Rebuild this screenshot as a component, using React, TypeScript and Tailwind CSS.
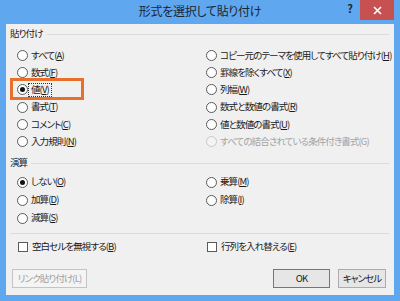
import React from "react";

const font = { fontFamily: '"Noto Sans CJK JP", "Noto Sans", sans-serif', fontFeatureSettings: '"palt"' };

type Opt = { label: string; key: string; checked?: boolean; disabled?: boolean; focus?: boolean };

const Radio = ({ checked, disabled }: { checked?: boolean; disabled?: boolean }) => (
  <span
    className={`w-[11px] h-[11px] rounded-full border flex items-center justify-center shrink-0 ${
      disabled ? "border-[#c8c8c8] bg-[#f4f4f4]" : "border-[#5a5a5a] bg-white"
    }`}
  >
    {checked && <span className="w-[5px] h-[5px] rounded-full bg-[#111]" />}
  </span>
);

const Label = ({ label, k }: { label: string; k: string }) => (
  <>
    {label}(<span className="underline underline-offset-[1px]">{k}</span>)
  </>
);

const Option = ({ o, h }: { o: Opt; h: string }) => (
  <div className={`flex items-center gap-[2px] whitespace-nowrap ${h}`}>
    <Radio checked={o.checked} disabled={o.disabled} />
    <span
      className={`leading-none px-[1px] ${o.disabled ? "text-[#a3a3a3]" : "text-[#1a1a1a]"} ${
        o.focus ? "outline outline-1 outline-dotted outline-[#333] outline-offset-[1px]" : ""
      }`}
    >
      {o.disabled ? `${o.label}(${o.key})` : <Label label={o.label} k={o.key} />}
    </span>
  </div>
);

const Header = ({ title }: { title: string }) => (
  <div className="flex items-center gap-[4px] h-[18px] pr-[5px]">
    <span className="text-[#1a1a1a] leading-none">{title}</span>
    <span className="flex-1 h-px bg-[#dcdcdc]" />
  </div>
);

const pasteLeft: Opt[] = [
  { label: "すべて", key: "A" },
  { label: "数式", key: "F" },
  { label: "値", key: "V", checked: true, focus: true },
  { label: "書式", key: "T" },
  { label: "コメント", key: "C" },
  { label: "入力規則", key: "N" },
];

const pasteRight: Opt[] = [
  { label: "コピー元のテーマを使用してすべて貼り付け", key: "H" },
  { label: "罫線を除くすべて", key: "X" },
  { label: "列幅", key: "W" },
  { label: "数式と数値の書式", key: "R" },
  { label: "値と数値の書式", key: "U" },
  { label: "すべての結合されている条件付き書式", key: "G", disabled: true },
];

const opLeft: Opt[] = [
  { label: "しない", key: "O", checked: true },
  { label: "加算", key: "D" },
  { label: "減算", key: "S" },
];

const opRight: Opt[] = [
  { label: "乗算", key: "M" },
  { label: "除算", key: "I" },
];

export default function App() {
  return (
    <div className="w-[400px] h-[301px] bg-[#5fa7ef] flex flex-col" style={font}>
      {/* title bar */}
      <div className="h-[24px] grid grid-cols-[1fr_auto_1fr] items-start">
        <div />
        <div className="pt-[5px] text-[12px] tracking-[-0.3px] text-[#1c2633] leading-none whitespace-nowrap">
          形式を選択して貼り付け
        </div>
        <div className="flex justify-end pr-[6px]">
          <span className="mt-[3px] mr-[7px] text-[11px] font-bold text-[#1c2633] leading-none">?</span>
          <div className="w-[34px] h-[20px] bg-[#c75050] flex items-center justify-center">
            <svg width="9" height="9" viewBox="0 0 9 9">
              <path d="M1 1 L8 8 M8 1 L1 8" stroke="#fff" strokeWidth="1.6" />
            </svg>
          </div>
        </div>
      </div>

      {/* body */}
      <div className="mx-[6px] mb-[6px] flex-1 bg-[#f0f0f0] flex flex-col pl-[4px] pt-[1px] text-[9.5px] tracking-[-0.9px]">
        <Header title="貼り付け" />
        <div className="grid grid-cols-[189px_1fr] pl-[7px] mt-[4px]">
          <div className="flex flex-col">
            {pasteLeft.map((o) => (
              <div key={o.key} className="relative">
                <Option o={o} h="h-[17.2px]" />
                {o.focus && (
                  <span className="absolute left-[-7px] top-[-3px] w-[74px] h-[22px] border-[3px] border-[#e8702a]" />
                )}
              </div>
            ))}
          </div>
          <div className="flex flex-col">
            {pasteRight.map((o) => (
              <Option key={o.key} o={o} h="h-[17.2px]" />
            ))}
          </div>
        </div>

        <div className="mt-[4px]">
          <Header title="演算" />
        </div>
        <div className="grid grid-cols-[189px_1fr] pl-[7px] mt-[1px]">
          <div className="flex flex-col">
            {opLeft.map((o) => (
              <Option key={o.key} o={o} h="h-[18px]" />
            ))}
          </div>
          <div className="flex flex-col">
            {opRight.map((o) => (
              <Option key={o.key} o={o} h="h-[18px]" />
            ))}
          </div>
        </div>

        <div className="h-px bg-[#dcdcdc] mr-[5px] mt-[6px]" />

        <div className="grid grid-cols-[189px_1fr] pl-[8px] mt-[8px]">
          <div className="flex items-center gap-[4px] whitespace-nowrap">
            <span className="w-[10px] h-[10px] border border-[#5a5a5a] bg-white" />
            <span className="leading-none text-[#1a1a1a]">
              <Label label="空白セルを無視する" k="B" />
            </span>
          </div>
          <div className="flex items-center gap-[4px] whitespace-nowrap">
            <span className="w-[10px] h-[10px] border border-[#5a5a5a] bg-white" />
            <span className="leading-none text-[#1a1a1a]">
              <Label label="行列を入れ替える" k="E" />
            </span>
          </div>
        </div>

        <div className="flex items-center mt-[17px] pr-[8px] whitespace-nowrap">
          <button className="ml-[2px] w-[75px] h-[19px] border border-[#c4c4c4] bg-[#f4f4f4] text-[#a0a0a0] leading-none">
            リンク貼り付け(L)
          </button>
          <div className="flex-1" />
          <button className="w-[57px] h-[19px] border border-[#3c84c8] bg-[#e6e6e6] text-[#1a1a1a] leading-none">
            OK
          </button>
          <button className="ml-[8px] w-[48px] h-[19px] border border-[#acacac] bg-[#e6e6e6] text-[#1a1a1a] leading-none">
            キャンセル
          </button>
        </div>
      </div>
    </div>
  );
}
